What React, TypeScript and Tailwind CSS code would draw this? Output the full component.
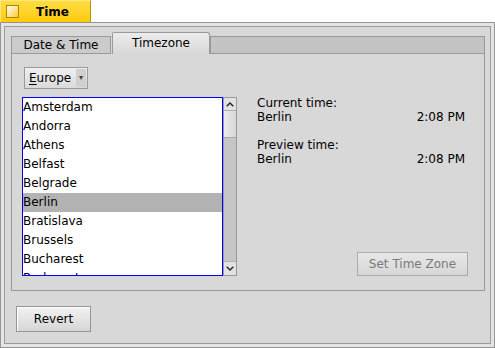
import React from "react";

const cities = [
  "Amsterdam",
  "Andorra",
  "Athens",
  "Belfast",
  "Belgrade",
  "Berlin",
  "Bratislava",
  "Brussels",
  "Bucharest",
  "Budapest",
];

function Chevron({ up }: { up?: boolean }) {
  return (
    <svg width="8" height="6" viewBox="0 0 8 6" className="block">
      {up ? (
        <path d="M0 5 L4 1 L8 5 L6.5 5.5 L4 3 L1.5 5.5 Z" fill="#222" />
      ) : (
        <path d="M0 1 L4 5 L8 1 L6.5 0.5 L4 3 L1.5 0.5 Z" fill="#222" />
      )}
    </svg>
  );
}

export default function App() {
  return (
    <div className="w-[495px] h-[348px] bg-white flex flex-col font-['DejaVu_Sans',sans-serif] text-[12px] text-black leading-none overflow-hidden">
      {/* Yellow title tab */}
      <div className="h-[22px] w-[91px] flex items-center border-t border-l border-r border-t-[#ffe680] border-l-[#ffe680] border-r-[#b89400] bg-gradient-to-b from-[#ffdc40] to-[#ffcb00]">
        <div className="ml-[5px] w-[13px] h-[13px] border border-[#a88800] bg-gradient-to-br from-[#fffbe8] to-[#ffcb00]" />
        <div className="ml-[17px] font-bold text-[12px] leading-[14px]">Time</div>
      </div>
      {/* Window frame */}
      <div className="h-[326px] border border-[#959595] bg-[#e4e4e4] p-[3px]">
        <div className="h-full border border-[#9c9c9c] bg-[#d8d8d8] flex flex-col">
          {/* Tab view */}
          <div className="mt-[5px] ml-[6px] mr-[5px] flex flex-col">
            <div className="h-[22px] flex items-end">
              <div className="w-[100px] h-[18px] border border-[#9a9a9a] bg-[#cbcbcb] flex items-center justify-center leading-[14px]">
                Date &amp; Time
              </div>
              <div className="w-[98px] h-[22px] ml-[1px] border border-b-0 border-[#9a9a9a] rounded-tl-[2px] rounded-tr-[3px] bg-gradient-to-b from-[#ececec] to-[#d8d8d8] flex items-center justify-center leading-[14px] pb-[2px]">
                Timezone
              </div>
              <div className="flex-1 h-[18px] border border-[#9a9a9a] bg-[#c4c4c4]" />
            </div>
            <div className="h-[237px] border border-t-0 border-[#9a9a9a] flex flex-col">
              {/* menu field */}
              <div className="ml-[12px] mt-[13px] w-[64px] h-[22px] border border-[#9a9a9a] bg-gradient-to-b from-[#f0f0f0] to-[#dadada] flex items-center">
                <span className="ml-[4px] leading-[14px]">
                  <span className="underline underline-offset-2">E</span>urope
                </span>
                <div className="ml-auto mr-[1px] w-[10px] h-[18px] bg-[#cfcfcf] flex items-center justify-center text-[8px] text-[#444]">
                  ▾
                </div>
              </div>
              <div className="mt-[8px] ml-[10px] mr-[16px] flex">
                {/* list */}
                <div className="flex">
                  <div className="w-[201px] h-[179px] border border-[#0000ff] bg-white overflow-hidden">
                    {cities.map((c, i) => (
                      <div
                        key={c}
                        className={`h-[19px] leading-[19px] whitespace-nowrap ${
                          i === 5 ? "bg-[#b3b3b3]" : ""
                        }`}
                      >
                        {c}
                      </div>
                    ))}
                  </div>
                  <div className="w-[14px] h-[179px] border border-[#9a9a9a] bg-[#c6c6c6] flex flex-col">
                    <div className="h-[13px] bg-[#e2e2e2] border-b border-[#b0b0b0] flex items-center justify-center">
                      <Chevron up />
                    </div>
                    <div className="h-[27px] bg-gradient-to-r from-[#ececec] to-[#d6d6d6] border-b border-[#a8a8a8]" />
                    <div className="flex-1" />
                    <div className="h-[14px] bg-[#e2e2e2] border-t border-[#b0b0b0] flex items-center justify-center">
                      <Chevron />
                    </div>
                  </div>
                </div>
                {/* right column */}
                <div className="ml-[20px] flex-1 flex flex-col h-[179px]">
                  <div className="-mt-[1px] leading-[14px]">
                    <div>Current time:</div>
                    <div className="flex justify-between pr-[3px]">
                      <span>Berlin</span>
                      <span>2:08 PM</span>
                    </div>
                    <div className="mt-[14px]">Preview time:</div>
                    <div className="flex justify-between pr-[3px]">
                      <span>Berlin</span>
                      <span>2:08 PM</span>
                    </div>
                  </div>
                  <div className="mt-auto self-end w-[111px] h-[24px] border border-[#ababab] bg-gradient-to-b from-[#e8e8e8] to-[#d6d6d6] flex items-center justify-center text-[#7a7a7a] leading-[14px]">
                    Set Time Zone
                  </div>
                </div>
              </div>
            </div>
          </div>
          {/* Revert */}
          <div className="mt-[15px] ml-[11px] w-[75px] h-[26px] border border-[#959595] bg-gradient-to-b from-[#f2f2f2] to-[#d6d6d6] flex items-center justify-center leading-[14px] shadow-[inset_1px_1px_0_#ffffff]">
            Revert
          </div>
        </div>
      </div>
    </div>
  );
}
